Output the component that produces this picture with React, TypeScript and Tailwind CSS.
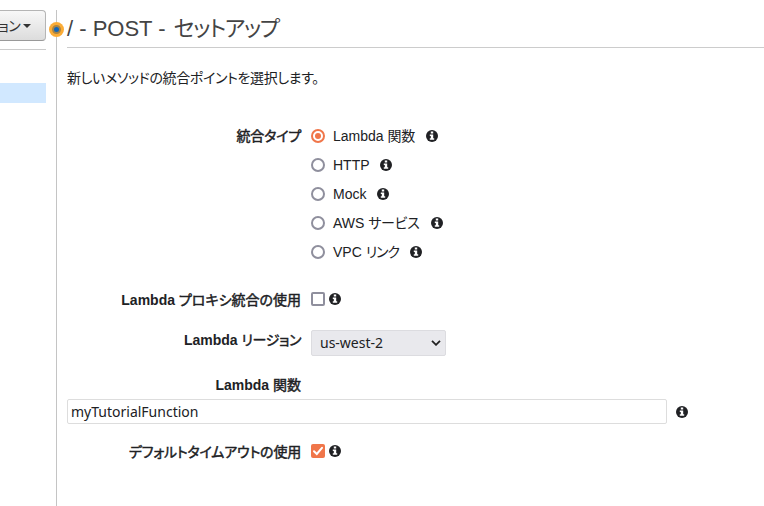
import React from "react";

const jp = "[font-feature-settings:'palt'] whitespace-nowrap";

function Info({ className = "" }: { className?: string }) {
  return (
    <svg viewBox="0 0 12 12" className={`h-3 w-3 shrink-0 ${className}`}>
      <circle cx="6" cy="6" r="6" fill="#202124" />
      <path d="M4.8 1.5h2.4v2H4.8zM3.8 4.6h3.4v3.7h1v1.5H3.8V8.3h1V6.1h-1z" fill="#fff" />
    </svg>
  );
}

function Radio({ checked = false }: { checked?: boolean }) {
  return (
    <span
      className={`flex h-3.5 w-3.5 shrink-0 items-center justify-center rounded-full border-2 bg-white ${
        checked ? "border-[#f0764a]" : "border-[#8f8f9d]"
      }`}
    >
      {checked && <span className="h-1.5 w-1.5 rounded-full bg-[#f0764a]" />}
    </span>
  );
}

const options = [
  { latin: "Lambda ", kana: "関数", gap: "w-[93px]", spacing: "tracking-[-0.2px]" },
  { latin: "HTTP", kana: "", gap: "w-[47px]", spacing: "" },
  { latin: "Mock", kana: "", gap: "w-[44px]", spacing: "" },
  { latin: "AWS ", kana: "サービス", gap: "w-[98px]", spacing: "tracking-[-0.3px]" },
  { latin: "VPC ", kana: "リンク", gap: "w-[77px]", spacing: "tracking-[-1.1px]" },
];

function Label({ latin = "", kana, spacing = "" }: { latin?: string; kana: string; spacing?: string }) {
  return (
    <div className="flex w-[234px] shrink-0 justify-end whitespace-pre font-bold leading-5">
      <span>{latin}</span>
      <span className={`${jp} font-normal [-webkit-text-stroke:0.45px_#202124] ${spacing}`}>{kana}</span>
    </div>
  );
}

export default function App() {
  return (
    <div className="flex h-[506px] w-[764px] overflow-hidden bg-white pt-2.5 font-['Liberation_Sans','Noto_Sans_CJK_JP',sans-serif] text-sm leading-5 text-[#202124]">
      <aside className="w-[46px] shrink-0">
        <div className="flex h-[31px] items-center justify-end rounded-r border border-l-0 border-[#b5b5b5] border-b-[#999] bg-gradient-to-b from-[#f8f8f8] to-[#dcdcdc] pr-3.5 text-[#333]">
          <span className={`${jp} tracking-[-0.6px]`}>ョン</span>
          <span className="ml-[3px] border-x-4 border-t-4 border-x-transparent border-t-[#333]" />
        </div>
        <div className="mt-2 border-t border-[#ccc]" />
        <div className="mt-[33px] h-5 bg-[#d1e8ff]" />
      </aside>
      <main className="relative ml-2.5 min-w-0 flex-1 border-l border-[#c4c4c4] pl-2.5">
        <span className="absolute -left-2 top-3 flex h-[15px] w-[15px] items-center justify-center rounded-full bg-[#fbac36]">
          <span className="h-[9px] w-[9px] rounded-full border-2 border-[#a98444] bg-[#1166bb]" />
        </span>
        <h1 className="flex h-[38px] items-center whitespace-pre border-b border-[#ccc] text-[22px] text-[#444]">
          <span>/ - POST - </span>
          <span className={`${jp} ml-0.5 tracking-[-1.4px]`}>セットアップ</span>
        </h1>
        <p className={`mt-5 tracking-[-0.36px] ${jp}`}>新しいメソッドの統合ポイントを選択します。</p>
        <div className="mt-[38px] flex gap-2.5">
          <Label kana="統合タイプ" spacing="tracking-[-0.2px]" />
          <div className="flex flex-col gap-[9px]">
            {options.map((o) => (
              <div key={o.latin} className="flex h-5 items-center">
                <Radio checked={o.kana === "関数"} />
                <span className={`ml-2 flex whitespace-pre ${o.gap}`}>
                  <span>{o.latin}</span>
                  <span className={`${jp} ${o.spacing}`}>{o.kana}</span>
                </span>
                <Info />
              </div>
            ))}
          </div>
        </div>
        <div className="mt-[28px] flex h-5 gap-2.5">
          <Label latin="Lambda " kana="プロキシ統合の使用" />
          <span className="mt-0.5 h-3.5 w-3.5 rounded-[2px] border-2 border-[#8f8f9d]" />
          <Info className="-ml-1.5 mt-[3px]" />
        </div>
        <div className="mt-5 flex gap-2.5">
          <Label latin="Lambda " kana="リージョン" spacing="tracking-[-0.4px]" />
          <div className="flex h-[26px] w-[135px] items-center justify-between rounded-[2px] border border-[#dcdce0] bg-[#e9e9ed] pl-2 pr-1 font-['Noto_Sans',sans-serif]">
            us-west-2
            <svg viewBox="0 0 10 6" className="h-1.5 w-2.5">
              <path d="M1 .8 5 4.8 9 .8" fill="none" stroke="#222" strokeWidth="1.8" />
            </svg>
          </div>
        </div>
        <div className="mt-[19px]">
          <Label latin="Lambda " kana="関数" />
        </div>
        <div className="mt-1 flex items-center">
          <div className="flex h-[25px] w-[600px] items-center rounded-[2px] border border-[#ddd] pl-[3px] font-['Noto_Sans',sans-serif]">
            myTutorialFunction
          </div>
          <Info className="ml-[9px]" />
        </div>
        <div className="mt-[18px] flex h-5 gap-2.5">
          <Label kana="デフォルトタイムアウトの使用" spacing="tracking-[-0.2px]" />
          <span className="mt-0.5 flex h-3.5 w-3.5 items-center justify-center rounded-[2px] bg-[#f0764a]">
            <svg viewBox="0 0 14 14" className="h-3.5 w-3.5">
              <path d="m3 7.2 2.8 2.8L11 3.8" fill="none" stroke="#fff" strokeWidth="2" strokeLinecap="round" />
            </svg>
          </span>
          <Info className="-ml-1.5 mt-[3px]" />
        </div>
      </main>
    </div>
  );
}
